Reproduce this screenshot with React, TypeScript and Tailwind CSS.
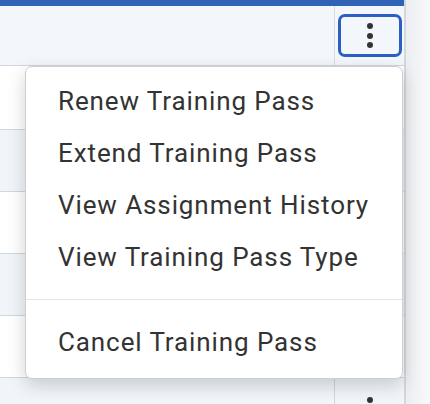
const menuItems = [
  "Renew Training Pass",
  "Extend Training Pass",
  "View Assignment History",
  "View Training Pass Type",
];

function Dots() {
  return (
    <div className="flex flex-col items-center gap-[3.5px]">
      <span className="h-[6px] w-[6px] rounded-full bg-[#333]" />
      <span className="h-[6px] w-[6px] rounded-full bg-[#333]" />
      <span className="h-[6px] w-[6px] rounded-full bg-[#333]" />
    </div>
  );
}

function Row({ shaded, height, last }: { shaded: boolean; height: string; last?: boolean }) {
  return (
    <div
      className={`grid grid-cols-[335px_1fr] ${height} ${last ? "" : "border-b border-[#cfd7df]"} ${
        shaded ? "bg-[#f1f5f9]" : "bg-white"
      }`}
    >
      <div className="border-r border-[#cfd7df]" />
      <div className="flex items-center justify-center">
        <Dots />
      </div>
    </div>
  );
}

export default function App() {
  return (
    <div
      className="relative flex h-[404px] w-[430px] overflow-hidden bg-[#f6f7f9]"
      style={{ fontFamily: "Roboto, 'Liberation Sans', sans-serif" }}
    >
      <div className="w-[406px] shrink-0 border-r-2 border-[#d3d8dd]">
        <div className="h-[6px] bg-[#3062b6]" />
        <div className="grid h-[60px] grid-cols-[335px_1fr] border-b border-[#cfd7df] bg-[#f3f6fa]">
          <div className="border-r border-[#d6dde4]" />
          <div className="flex items-center justify-center">
            <button className="flex h-[43px] w-[64px] items-center justify-center rounded-[7px] border-[3px] border-[#2b5fc4] bg-[#f3f6fa]">
              <Dots />
            </button>
          </div>
        </div>
        <Row shaded={false} height="h-[64px]" />
        <Row shaded height="h-[62px]" />
        <Row shaded={false} height="h-[62px]" />
        <Row shaded height="h-[62px]" />
        <Row shaded={false} height="h-[62px]" />
        <Row shaded height="h-[62px]" last />
      </div>
      <div className="flex-1 bg-gradient-to-r from-[#eceef1] to-[#f8f9fb]" />

      <div className="absolute left-[25px] top-[66px] w-[378px] rounded-[7px] border border-[#cfcfcf] bg-white pb-[10px] pt-[8px] text-[26px] tracking-[0.9px] text-[#333] shadow-[0_6px_18px_rgba(0,0,0,0.18)]">
        {menuItems.map((item) => (
          <div key={item} className="flex h-[52px] items-center pl-[32px]">
            {item}
          </div>
        ))}
        <div className="my-[16px] h-px bg-[#e6e6e6]" />
        <div className="flex h-[52px] items-center pl-[32px]">Cancel Training Pass</div>
      </div>
    </div>
  );
}
